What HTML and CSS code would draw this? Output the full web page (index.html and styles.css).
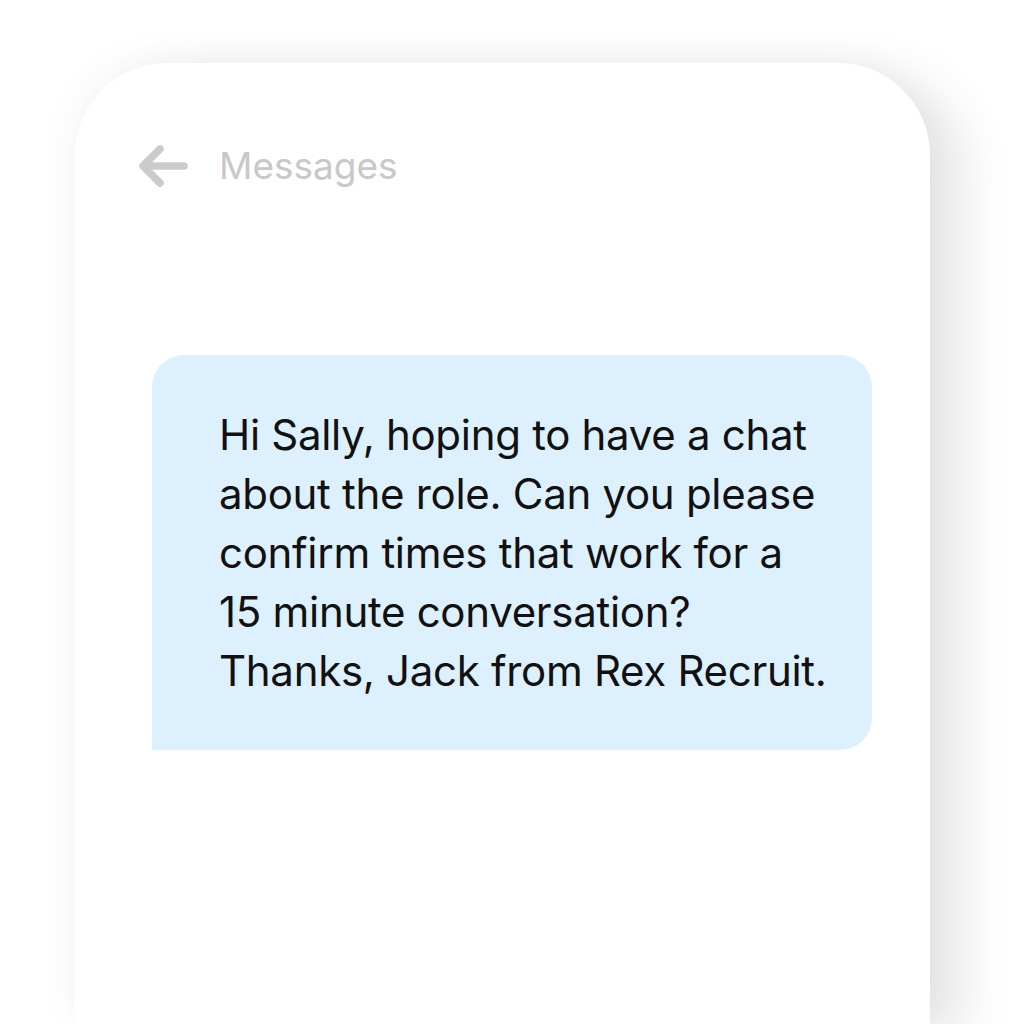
FILE: index.html
```html
<!DOCTYPE html>
<html lang="en">
<head>
    <meta charset="UTF-8">
    <meta name="viewport" content="width=device-width, initial-scale=1.0">
    <title>Messages</title>
    <link rel="stylesheet" href="styles.css">
</head>
<body>
    <div class="phone">
        <div class="header">
            <svg class="back" width="50" height="46" viewBox="0 0 50 46">
                <path d="M45 23H6M21 6L4 23L21 40" fill="none" stroke="#cbcbcb" stroke-width="7.5" stroke-linecap="round" stroke-linejoin="round"/>
            </svg>
            <span class="title">Messages</span>
        </div>
        <div class="bubble">
            <p>Hi Sally, hoping to have a chat<br>
            about the role. Can you please<br>
            confirm times that work for a<br>
            15 minute conversation?<br>
            Thanks, Jack from Rex Recruit.</p>
        </div>
    </div>
</body>
</html>
```

FILE: styles.css
```css
html, body {
    height: 1024px;
    overflow: hidden;
}

body {
    margin: 0;
    padding: 0;
    background-color: #ffffff;
    font-family: "Inter", "Liberation Sans", sans-serif;
}

.phone {
    width: 855px;
    height: 961px;
    margin: 63px 0 0 75px;
    background-color: #ffffff;
    border-radius: 92px 92px 0 0;
    box-shadow: 34px 12px 50px rgba(0, 0, 0, 0.1), -6px -8px 36px rgba(0, 0, 0, 0.035);
    padding: 80px 0 0 64px;
    box-sizing: border-box;
}

.header {
    display: flex;
    align-items: center;
    gap: 30px;
    height: 46px;
}

.back {
    display: block;
}

.title {
    font-size: 37px;
    color: #c8c8c8;
    margin-top: -2px;
}

.bubble {
    width: 720px;
    height: 395px;
    margin: 166px 0 0 13px;
    background-color: #ddf0fe;
    border-radius: 32px 32px 32px 0;
    padding: 50px 0 0 67px;
    box-sizing: border-box;
}

.bubble p {
    margin: 0;
    font-size: 42px;
    line-height: 59px;
    letter-spacing: -0.3px;
    color: #111111;
}
```
